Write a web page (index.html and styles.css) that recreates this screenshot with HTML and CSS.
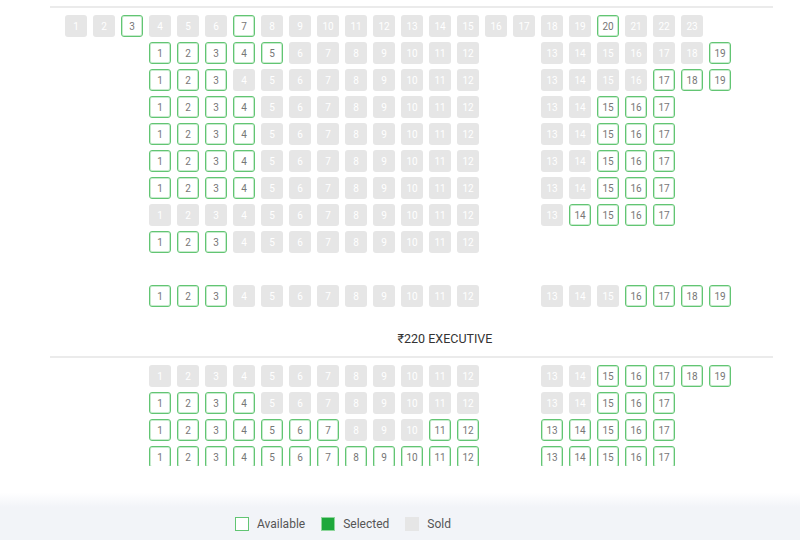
FILE: index.html
```html
<!DOCTYPE html>
<html lang="en">
<head>
<meta charset="utf-8">
<title>Seat layout</title>
<link rel="stylesheet" href="styles.css">
</head>
<body>
<div class="scroll">
  <div class="divider first"></div>
  <div class="block">
    <div class="row">
      <span class="x">1</span><span class="x">2</span><span class="o">3</span><span class="x">4</span><span class="x">5</span><span class="x">6</span><span class="o">7</span><span class="x">8</span><span class="x">9</span><span class="x">10</span><span class="x">11</span><span class="x">12</span><span class="x">13</span><span class="x">14</span><span class="x">15</span><span class="x">16</span><span class="x">17</span><span class="x">18</span><span class="x">19</span><span class="o">20</span><span class="x">21</span><span class="x">22</span><span class="x">23</span>
    </div>
    <div class="row">
      <span class="n"></span><span class="n"></span><span class="n"></span>
      <span class="o">1</span><span class="o">2</span><span class="o">3</span><span class="o">4</span><span class="o">5</span><span class="x">6</span><span class="x">7</span><span class="x">8</span><span class="x">9</span><span class="x">10</span><span class="x">11</span><span class="x">12</span>
      <span class="n"></span><span class="n"></span>
      <span class="x">13</span><span class="x">14</span><span class="x">15</span><span class="x">16</span><span class="x">17</span><span class="x">18</span><span class="o">19</span>
    </div>
    <div class="row">
      <span class="n"></span><span class="n"></span><span class="n"></span>
      <span class="o">1</span><span class="o">2</span><span class="o">3</span><span class="x">4</span><span class="x">5</span><span class="x">6</span><span class="x">7</span><span class="x">8</span><span class="x">9</span><span class="x">10</span><span class="x">11</span><span class="x">12</span>
      <span class="n"></span><span class="n"></span>
      <span class="x">13</span><span class="x">14</span><span class="x">15</span><span class="x">16</span><span class="o">17</span><span class="o">18</span><span class="o">19</span>
    </div>
    <div class="row">
      <span class="n"></span><span class="n"></span><span class="n"></span>
      <span class="o">1</span><span class="o">2</span><span class="o">3</span><span class="o">4</span><span class="x">5</span><span class="x">6</span><span class="x">7</span><span class="x">8</span><span class="x">9</span><span class="x">10</span><span class="x">11</span><span class="x">12</span>
      <span class="n"></span><span class="n"></span>
      <span class="x">13</span><span class="x">14</span><span class="o">15</span><span class="o">16</span><span class="o">17</span>
    </div>
    <div class="row">
      <span class="n"></span><span class="n"></span><span class="n"></span>
      <span class="o">1</span><span class="o">2</span><span class="o">3</span><span class="o">4</span><span class="x">5</span><span class="x">6</span><span class="x">7</span><span class="x">8</span><span class="x">9</span><span class="x">10</span><span class="x">11</span><span class="x">12</span>
      <span class="n"></span><span class="n"></span>
      <span class="x">13</span><span class="x">14</span><span class="o">15</span><span class="o">16</span><span class="o">17</span>
    </div>
    <div class="row">
      <span class="n"></span><span class="n"></span><span class="n"></span>
      <span class="o">1</span><span class="o">2</span><span class="o">3</span><span class="o">4</span><span class="x">5</span><span class="x">6</span><span class="x">7</span><span class="x">8</span><span class="x">9</span><span class="x">10</span><span class="x">11</span><span class="x">12</span>
      <span class="n"></span><span class="n"></span>
      <span class="x">13</span><span class="x">14</span><span class="o">15</span><span class="o">16</span><span class="o">17</span>
    </div>
    <div class="row">
      <span class="n"></span><span class="n"></span><span class="n"></span>
      <span class="o">1</span><span class="o">2</span><span class="o">3</span><span class="o">4</span><span class="x">5</span><span class="x">6</span><span class="x">7</span><span class="x">8</span><span class="x">9</span><span class="x">10</span><span class="x">11</span><span class="x">12</span>
      <span class="n"></span><span class="n"></span>
      <span class="x">13</span><span class="x">14</span><span class="o">15</span><span class="o">16</span><span class="o">17</span>
    </div>
    <div class="row">
      <span class="n"></span><span class="n"></span><span class="n"></span>
      <span class="x">1</span><span class="x">2</span><span class="x">3</span><span class="x">4</span><span class="x">5</span><span class="x">6</span><span class="x">7</span><span class="x">8</span><span class="x">9</span><span class="x">10</span><span class="x">11</span><span class="x">12</span>
      <span class="n"></span><span class="n"></span>
      <span class="x">13</span><span class="o">14</span><span class="o">15</span><span class="o">16</span><span class="o">17</span>
    </div>
    <div class="row">
      <span class="n"></span><span class="n"></span><span class="n"></span>
      <span class="o">1</span><span class="o">2</span><span class="o">3</span><span class="x">4</span><span class="x">5</span><span class="x">6</span><span class="x">7</span><span class="x">8</span><span class="x">9</span><span class="x">10</span><span class="x">11</span><span class="x">12</span>
    </div>
    <div class="row"></div>
    <div class="row">
      <span class="n"></span><span class="n"></span><span class="n"></span>
      <span class="o">1</span><span class="o">2</span><span class="o">3</span><span class="x">4</span><span class="x">5</span><span class="x">6</span><span class="x">7</span><span class="x">8</span><span class="x">9</span><span class="x">10</span><span class="x">11</span><span class="x">12</span>
      <span class="n"></span><span class="n"></span>
      <span class="x">13</span><span class="x">14</span><span class="x">15</span><span class="o">16</span><span class="o">17</span><span class="o">18</span><span class="o">19</span>
    </div>
  </div>

  <div class="title">₹220 EXECUTIVE</div>
  <div class="divider"></div>

  <div class="block">
    <div class="row">
      <span class="n"></span><span class="n"></span><span class="n"></span>
      <span class="x">1</span><span class="x">2</span><span class="x">3</span><span class="x">4</span><span class="x">5</span><span class="x">6</span><span class="x">7</span><span class="x">8</span><span class="x">9</span><span class="x">10</span><span class="x">11</span><span class="x">12</span>
      <span class="n"></span><span class="n"></span>
      <span class="x">13</span><span class="x">14</span><span class="o">15</span><span class="o">16</span><span class="o">17</span><span class="o">18</span><span class="o">19</span>
    </div>
    <div class="row">
      <span class="n"></span><span class="n"></span><span class="n"></span>
      <span class="o">1</span><span class="o">2</span><span class="o">3</span><span class="o">4</span><span class="x">5</span><span class="x">6</span><span class="x">7</span><span class="x">8</span><span class="x">9</span><span class="x">10</span><span class="x">11</span><span class="x">12</span>
      <span class="n"></span><span class="n"></span>
      <span class="x">13</span><span class="x">14</span><span class="o">15</span><span class="o">16</span><span class="o">17</span>
    </div>
    <div class="row">
      <span class="n"></span><span class="n"></span><span class="n"></span>
      <span class="o">1</span><span class="o">2</span><span class="o">3</span><span class="o">4</span><span class="o">5</span><span class="o">6</span><span class="o">7</span><span class="x">8</span><span class="x">9</span><span class="x">10</span><span class="o">11</span><span class="o">12</span>
      <span class="n"></span><span class="n"></span>
      <span class="o">13</span><span class="o">14</span><span class="o">15</span><span class="o">16</span><span class="o">17</span>
    </div>
    <div class="row">
      <span class="n"></span><span class="n"></span><span class="n"></span>
      <span class="o">1</span><span class="o">2</span><span class="o">3</span><span class="o">4</span><span class="o">5</span><span class="o">6</span><span class="o">7</span><span class="o">8</span><span class="o">9</span><span class="o">10</span><span class="o">11</span><span class="o">12</span>
      <span class="n"></span><span class="n"></span>
      <span class="o">13</span><span class="o">14</span><span class="o">15</span><span class="o">16</span><span class="o">17</span>
    </div>
  </div>
</div>
<div class="fade"></div>
<div class="legend">
  <div class="key"><span class="box box-avail"></span>Available</div>
  <div class="key"><span class="box box-sel"></span>Selected</div>
  <div class="key"><span class="box box-sold"></span>Sold</div>
</div>
</body>
</html>
```
FILE: styles.css
```css
html, body {
  margin: 0;
  padding: 0;
}
body {
  width: 800px;
  height: 540px;
  overflow: hidden;
  background: #fff;
  font-family: Roboto, "Noto Sans", "Liberation Sans", sans-serif;
}
.scroll {
  height: 466px;
  overflow: hidden;
}
.divider {
  height: 2px;
  background: #ebebeb;
  margin: 0 27px 0 50px;
}
.divider.first {
  margin-top: 6px;
}
.block {
  display: flex;
  flex-direction: column;
  gap: 5px;
  padding: 7px 0 0 65px;
}
.row {
  display: flex;
  gap: 6px;
  height: 22px;
}
.row span {
  flex: none;
  width: 22px;
  height: 22px;
  box-sizing: border-box;
  border-radius: 3px;
  font-size: 10px;
  display: flex;
  align-items: center;
  justify-content: center;
}
.row .o {
  border: 1px solid #62c573;
  box-shadow: inset 0 0 0 1px rgba(98, 197, 115, 0.35);
  color: #777;
  background: #fff;
}
.row .x {
  background: #e6e6e6;
  color: #fff;
}
.title {
  margin: 24px 0 0 90px;
  height: 16px;
  line-height: 16px;
  padding-bottom: 9px;
  text-align: center;
  font-size: 12.5px;
  font-weight: 400;
  color: #333;
}
.fade {
  height: 41px;
  background: linear-gradient(#fff 65%, #f2f4f8);
}
.legend {
  height: 33px;
  background: #f2f4f8;
  display: flex;
  align-items: center;
  gap: 16px;
  padding-left: 235px;
  font-size: 12px;
  color: #555;
}
.key {
  display: flex;
  align-items: center;
  gap: 8px;
}
.box {
  width: 14px;
  height: 14px;
  box-sizing: border-box;
}
.box-avail {
  border: 1px solid #62c573;
  background: #fff;
}
.box-sel {
  background: #1ea83c;
  border: 1px solid #8fd69c;
}
.box-sold {
  background: #e6e6e6;
}
```
